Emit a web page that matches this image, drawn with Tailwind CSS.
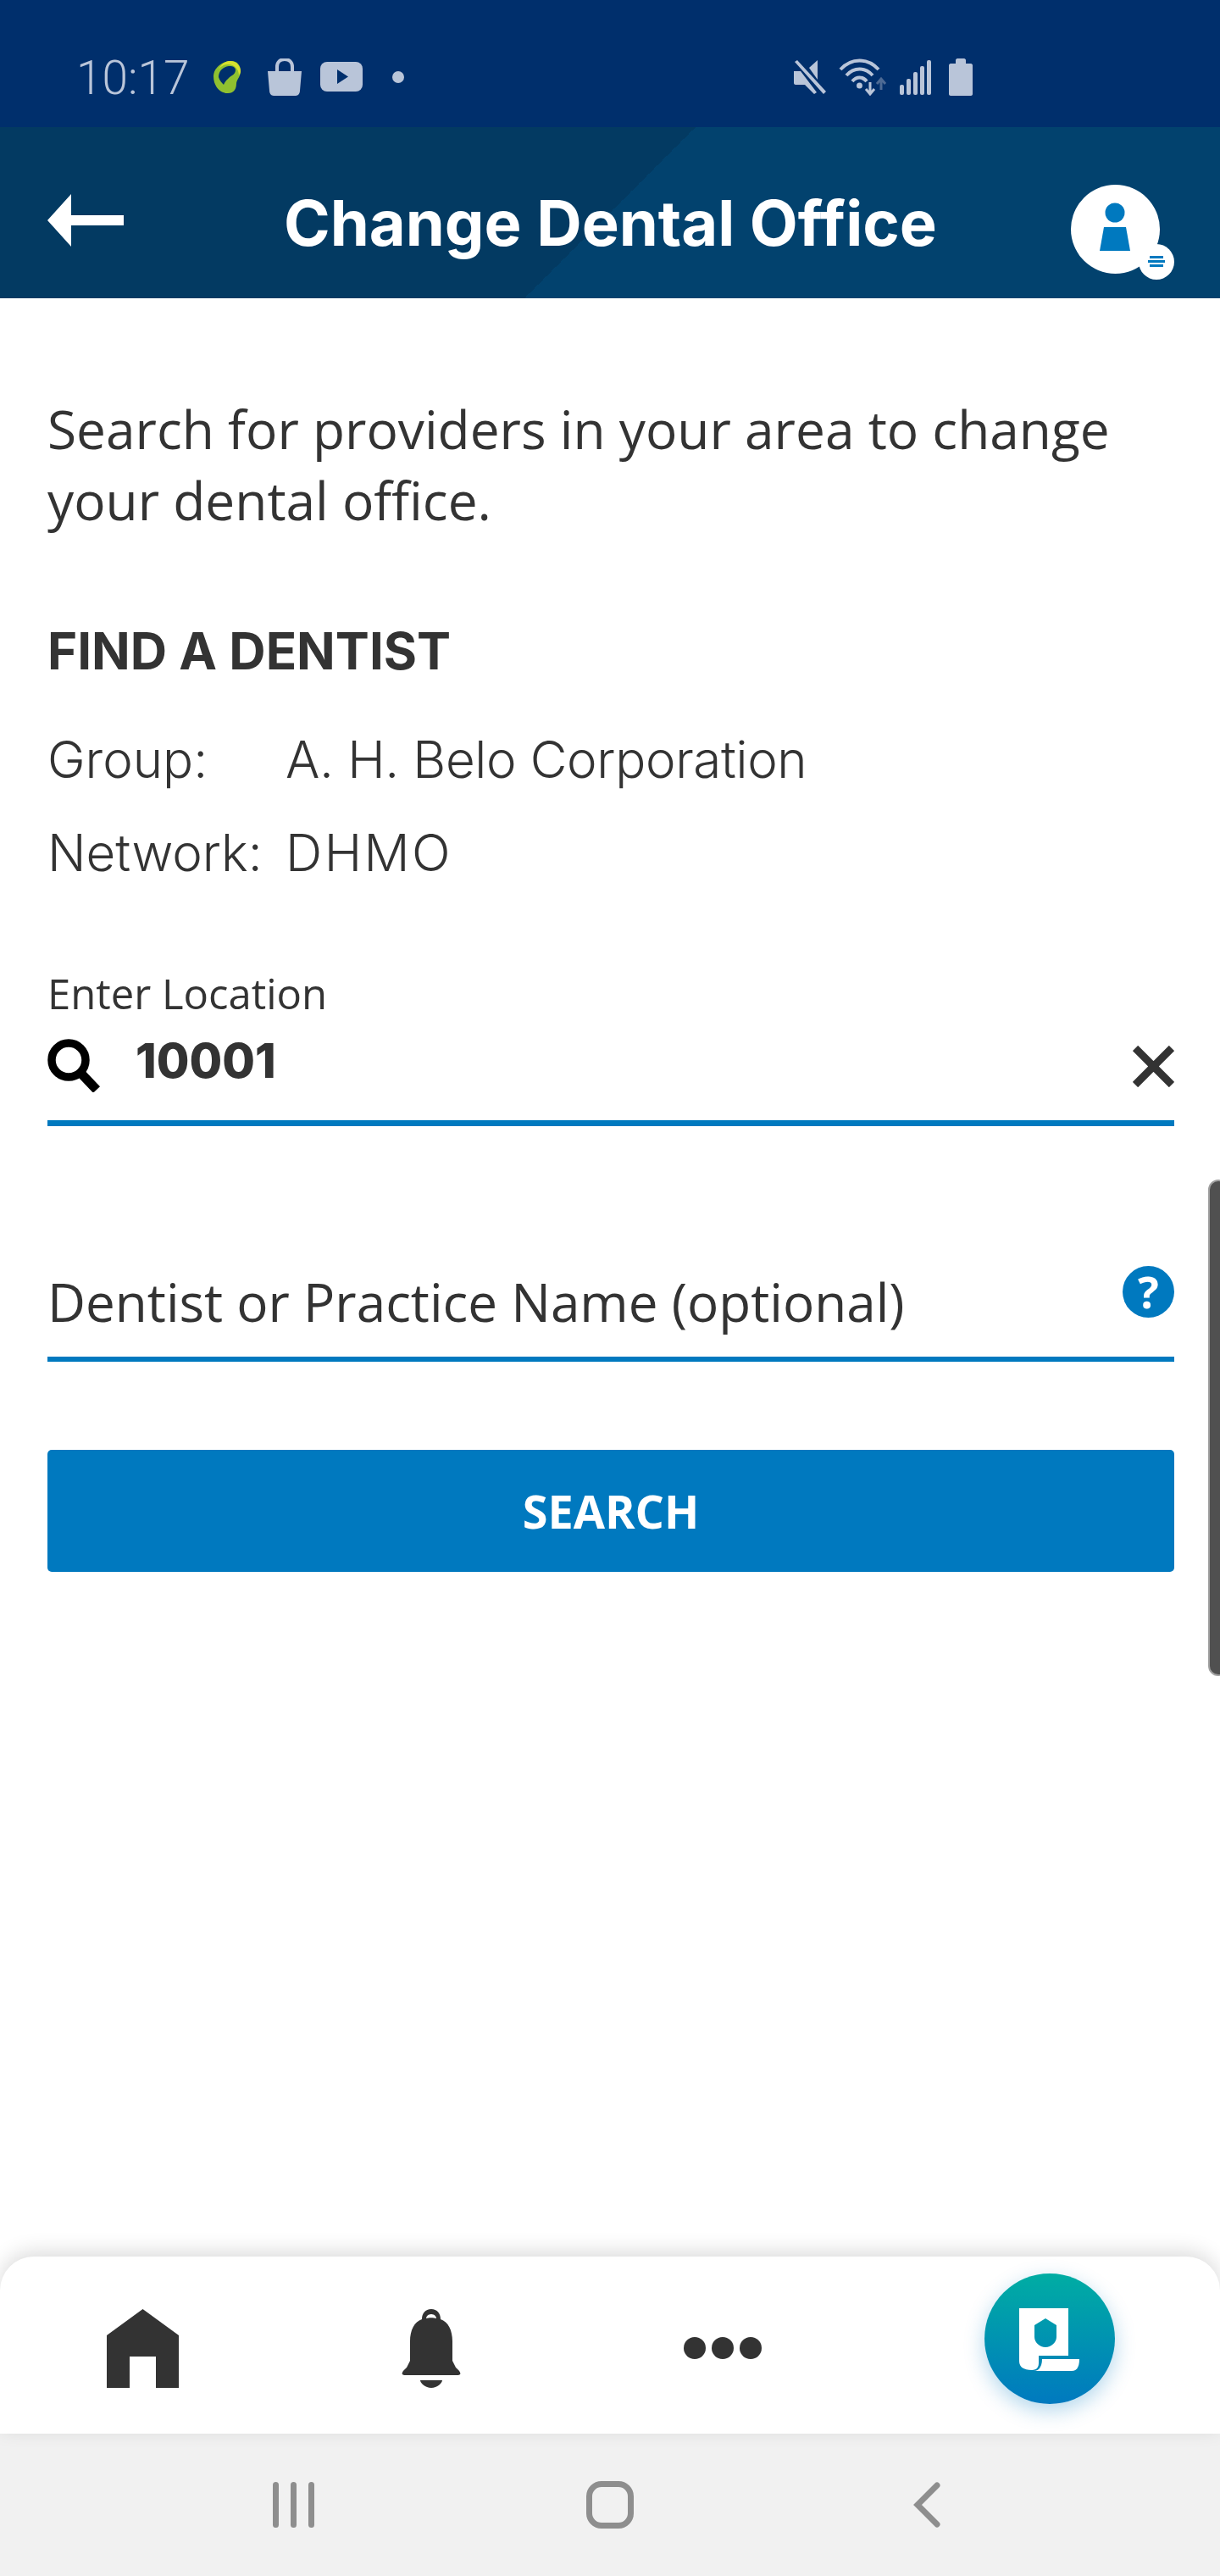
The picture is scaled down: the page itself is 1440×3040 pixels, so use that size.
<!DOCTYPE html>
<html lang="en">
<head>
    <meta charset="UTF-8">
    <title>Change Dental Office</title>
    <script src="https://cdn.jsdelivr.net/npm/@tailwindcss/browser@4"></script>
</head>
<body class="bg-white">
<div class="relative w-[1440px] h-[3040px] flex flex-col overflow-hidden font-['Open_Sans',sans-serif] text-[#333333]">

    <!-- Status bar -->
    <div class="h-[150px] shrink-0 bg-[#002f6c] relative flex items-center pt-[32px] text-[#b9c5d9]">
        <span class="ml-[90px] mb-[-2px] w-[135px] text-[55px] leading-none font-light font-['Roboto',sans-serif]">10:17</span>
        <!-- leaf -->
        <svg class="ml-[26px] w-[34px] h-[40px]" viewBox="0 0 34 40">
            <path fill-rule="evenodd" d="M20 1C29 0 33 6 33 13C33 19 29 22 28 27C28 33 26 39 18 39C8 39 1 30 1 19C1 10 10 2 20 1ZM19 7C12 8 7 13 7 20C8 24 11 27 13 29C15 24 20 20 23 18C27 16 28 11 26 9C24 7 22 7 19 7Z" fill="#8fc030"/>
            <path d="M19 1C27 0 33 6 33 13C33 15 32 16 31 18C31 11 26 5 18 5C13 5 9 8 7 11C9 6 13 2 19 1Z" fill="#d7e02f"/>
        </svg>
        <!-- bag -->
        <svg class="ml-[30px] w-[42px] h-[44px]" viewBox="0 0 42 44" fill="#b9c5d9">
            <path d="M1 15H41L39 38C39 41 37 44 34 44H8C5 44 3 41 3 38Z"/>
            <path d="M12 15V10C12 4 16 1 21 1C26 1 30 4 30 10V15" fill="none" stroke="#b9c5d9" stroke-width="4"/>
        </svg>
        <!-- video -->
        <svg class="ml-[21px] w-[50px] h-[36px]" viewBox="0 0 50 36">
            <rect width="50" height="35" y="0" rx="8" fill="#b9c5d9"/>
            <path d="M20 9L33 17.500L20 26Z" fill="#002f6c"/>
        </svg>
        <span class="ml-[35px] w-[14px] h-[14px] rounded-full bg-[#b9c5d9]"></span>

        <!-- mute -->
        <svg class="ml-[459px] w-[40px] h-[42px]" viewBox="0 0 40 42" fill="#b9c5d9">
            <path d="M1 14H9L28 39L25 41L14 30H3C2 30 1 29 1 28Z"/>
            <path d="M19 10L29 1V24Z"/>
            <path d="M2 3L5 1L39 38L36 41Z" />
        </svg>
        <!-- wifi with arrows -->
        <svg class="ml-[14px] w-[58px] h-[44px]" viewBox="0 0 58 44" fill="none">
            <path d="M2 13C15 -1 34 -1 47 13" stroke="#b9c5d9" stroke-width="4"/>
            <path d="M9 20C18 10 31 10 40 20" stroke="#b9c5d9" stroke-width="4"/>
            <path d="M16 27C21 21 28 21 33 27" stroke="#b9c5d9" stroke-width="4"/>
            <circle cx="24.500" cy="32" r="3.500" fill="#b9c5d9"/>
            <path d="M37 28V41M32 36L37 42L42 36" stroke="#b9c5d9" stroke-width="3"/>
            <path d="M50 37V24M45 30L50 24L55 30" stroke="#4d6a94" stroke-width="3"/>
        </svg>
        <!-- signal -->
        <svg class="ml-[14px] w-[37px] h-[41px]" viewBox="0 0 37 41" fill="#b9c5d9">
            <rect x="0" y="29" width="5" height="12" rx="2"/>
            <rect x="8" y="22" width="5" height="19" rx="2"/>
            <rect x="16" y="14" width="5" height="27" rx="2"/>
            <rect x="24" y="7" width="5" height="34" rx="2"/>
            <rect x="32" y="0" width="5" height="41" rx="2"/>
        </svg>
        <!-- battery -->
        <svg class="ml-[21px] w-[28px] h-[44px]" viewBox="0 0 28 44" fill="#b9c5d9">
            <path d="M8 2C8 1 9 0 10 0H18C19 0 20 1 20 2V6H26C27 6 28 7 28 8V42C28 43 27 44 26 44H2C1 44 0 43 0 42V8C0 7 1 6 2 6H8Z"/>
        </svg>
    </div>

    <!-- Header -->
    <div class="h-[202px] shrink-0 flex items-center bg-[linear-gradient(135deg,#033a62_50%,#02426e_50%)]">
        <svg class="ml-[56px] w-[90px] h-[62px] mt-[18px]" viewBox="0 0 90 62" fill="#ffffff">
            <path d="M0 31L28 0V25H90V37H28V62Z"/>
        </svg>
        <h1 class="ml-[189px] w-[771px] text-[74px] leading-none font-bold whitespace-nowrap font-['Inter',sans-serif] text-white mt-[24px]">Change Dental Office</h1>
        <!-- avatar -->
        <div class="relative ml-[158px] w-[105px] h-[105px] rounded-full bg-white mt-[38px]">
            <svg class="absolute left-0 top-0 w-[105px] h-[105px]" viewBox="0 0 105 105" fill="#0079bf">
                <circle cx="52" cy="33" r="11.500"/>
                <path d="M39 50H65L70 78H34Z"/>
            </svg>
            <div class="absolute left-[80px] top-[70px] w-[42px] h-[42px] rounded-full bg-white flex flex-col items-center justify-center gap-[2px]">
                <span class="block w-[16px] h-[3px] bg-[#0079bf]"></span>
                <span class="block w-[20px] h-[3px] bg-[#0079bf]"></span>
                <span class="block w-[16px] h-[3px] bg-[#0079bf]"></span>
            </div>
        </div>
    </div>

    <!-- Form -->
    <main class="flex-1 pl-[56px] pr-[54px]">
        <p class="mt-[112px] text-[62.2px] leading-[84px] whitespace-nowrap">Search for providers in your area to change<br>your dental office.</p>

        <h2 class="mt-[101px] text-[60px] leading-[70px] font-bold font-['Inter',sans-serif]">FIND A DENTIST</h2>

        <div class="mt-[53px] grid grid-cols-[281px_1fr] gap-y-[30px] text-[60px] leading-[80px] font-light font-['Inter',sans-serif]">
            <span>Group:</span><span class="tracking-[-0.35px]">A. H. Belo Corporation</span>
            <span>Network:</span><span class="tracking-[2.5px]">DHMO</span>
        </div>

        <label class="block mt-[96px] text-[49px] leading-[60px]">Enter Location</label>
        <div class="flex items-center h-[127px] border-b-[7px] border-[#0079bf]">
            <svg class="w-[63px] h-[63px] shrink-0 mt-[-9px]" viewBox="0 0 63 63" fill="none" stroke="#000000">
                <circle cx="25" cy="25" r="20" stroke-width="9.500"/>
                <path d="M39 40L58 60" stroke-width="11"/>
            </svg>
            <span class="ml-[41px] text-[56px] leading-none font-extrabold font-['Inter',sans-serif] mt-[-21px]">10001</span>
            <svg class="ml-auto w-[49px] h-[49px] shrink-0 mt-[-7px]" viewBox="0 0 49 49" stroke="#333333" stroke-width="9">
                <path d="M3 3L46 46M46 3L3 46"/>
            </svg>
        </div>

        <div class="flex items-center h-[118px] mt-[160px] border-b-[6px] border-[#0079bf]">
            <span class="text-[62px] leading-none mt-[-18px]">Dentist or Practice Name (optional)</span>
            <div class="ml-auto mt-[-42px] w-[61px] h-[61px] rounded-full bg-[#0079bf] text-white flex items-center justify-center text-[52px] leading-none font-bold">?</div>
        </div>

        <button class="mt-[104px] w-full h-[144px] rounded-[5px] bg-[#0079bf] text-white text-[54px] font-bold">SEARCH</button>
    </main>

    <!-- Bottom nav -->
    <nav class="relative h-[209px] shrink-0 bg-white rounded-t-[40px] shadow-[0_-6px_24px_rgba(0,0,0,0.14)] flex items-start">
        <svg class="ml-[126px] mt-[62px] w-[85px] h-[93px]" viewBox="0 0 85 93" fill="#333333">
            <path d="M42.500 0L85 31V93H58V56H27V93H0V31Z"/>
        </svg>
        <svg class="ml-[262px] mt-[62px] w-[72px] h-[93px]" viewBox="0 0 72 93" fill="#333333">
            <path fill-rule="evenodd" d="M36 0C43 0 47 5 47 12C56 15 61 25 61 38V61L65 69C72 75 72 78 66 78H6C0 78 0 75 7 69L11 61V38C11 25 16 15 25 12C25 5 29 0 36 0ZM36 6C32 6 30 9 30 11C33 10 39 10 42 11C42 9 40 6 36 6Z"/>
            <path d="M23 84H49C49 87 43 93 36 93C29 93 23 87 23 84Z"/>
        </svg>
        <div class="ml-[262px] mt-[95px] flex gap-[7px]">
            <span class="w-[26px] h-[26px] rounded-full bg-[#333333]"></span>
            <span class="w-[26px] h-[26px] rounded-full bg-[#333333]"></span>
            <span class="w-[26px] h-[26px] rounded-full bg-[#333333]"></span>
        </div>
        <div class="ml-[263px] mt-[20px] w-[154px] h-[154px] rounded-full bg-[linear-gradient(180deg,#00ada3,#0079bf)] shadow-[0_8px_24px_rgba(0,121,191,0.3)] flex items-center justify-center">
            <svg class="w-[72px] h-[74px] mt-[2px]" viewBox="0 0 72 74" fill="#ffffff">
                <path fill-rule="evenodd" d="M0 0H58V56H23V65C23 71 19 73 15 73C6 73 0 70 0 62ZM31 12L18 20V34C18 40 24 46 31 46C38 46 44 40 44 34V20Z"/>
                <path d="M27 60H71C71 68 69 74 62 74H17C24 74 27 68 27 60Z"/>
            </svg>
        </div>
    </nav>

    <!-- System nav -->
    <div class="h-[168px] shrink-0 bg-[#f1f1f1]">
        <div class="w-[1122px] h-full mx-auto grid grid-cols-3 items-center">
            <div class="flex justify-center gap-[14px]">
                <span class="w-[7px] h-[54px] rounded-full bg-[#8e8e8e]"></span>
                <span class="w-[7px] h-[54px] rounded-full bg-[#8e8e8e]"></span>
                <span class="w-[7px] h-[54px] rounded-full bg-[#8e8e8e]"></span>
            </div>
            <div class="flex justify-center">
                <span class="w-[56px] h-[56px] rounded-[18px] border-[7px] border-[#8e8e8e]"></span>
            </div>
            <div class="flex justify-center">
                <svg class="w-[32px] h-[54px]" viewBox="0 0 32 54" fill="none" stroke="#8e8e8e" stroke-width="7" stroke-linecap="round" stroke-linejoin="miter">
                    <path d="M28 4L5 27L28 50"/>
                </svg>
            </div>
        </div>
    </div>

    <!-- Overlay scroll handle -->
    <div class="absolute left-[1426px] top-[1392px] w-[24px] h-[586px] rounded-[14px] bg-[#505050] border-2 border-[#a0a0a0]"></div>
</div>
</body>
</html>
